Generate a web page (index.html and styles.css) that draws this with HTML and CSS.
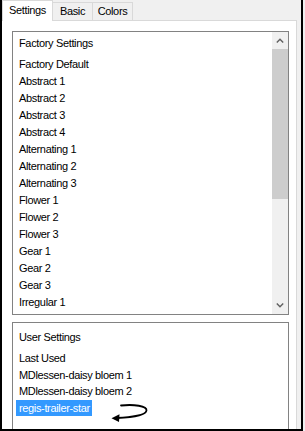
FILE: index.html
```html
<!DOCTYPE html>
<html lang="en">

<head>
    <meta charset="UTF-8">
    <meta name="viewport" content="width=device-width, initial-scale=1.0">
    <title>Settings</title>
    <link rel="stylesheet" href="styles.css">
</head>

<body>
    <div class="window">
        <div class="tabs">
            <div class="tab tab-active">Settings</div>
            <div class="tab">Basic</div>
            <div class="tab">Colors</div>
        </div>

        <div class="panel">
            <div class="listbox listbox-factory">
                <div class="list-body">
                    <div class="list-title">Factory Settings</div>
                    <ul class="list-items">
                        <li>Factory Default</li>
                        <li>Abstract 1</li>
                        <li>Abstract 2</li>
                        <li>Abstract 3</li>
                        <li>Abstract 4</li>
                        <li>Alternating 1</li>
                        <li>Alternating 2</li>
                        <li>Alternating 3</li>
                        <li>Flower 1</li>
                        <li>Flower 2</li>
                        <li>Flower 3</li>
                        <li>Gear 1</li>
                        <li>Gear 2</li>
                        <li>Gear 3</li>
                        <li>Irregular 1</li>
                    </ul>
                </div>
                <div class="scrollbar">
                    <div class="scroll-btn">
                        <svg width="8" height="5" viewBox="0 0 8 5">
                            <path d="M0.8 4.4 L4 1.2 L7.2 4.4" fill="none" stroke="#606060" stroke-width="1.4" />
                        </svg>
                    </div>
                    <div class="scroll-track">
                        <div class="scroll-thumb"></div>
                    </div>
                    <div class="scroll-btn">
                        <svg width="8" height="5" viewBox="0 0 8 5">
                            <path d="M0.8 0.6 L4 3.8 L7.2 0.6" fill="none" stroke="#606060" stroke-width="1.4" />
                        </svg>
                    </div>
                </div>
            </div>

            <div class="listbox listbox-user">
                <div class="list-body">
                    <div class="list-title">User Settings</div>
                    <ul class="list-items">
                        <li>Last Used</li>
                        <li>MDlessen-daisy bloem 1</li>
                        <li>MDlessen-daisy bloem 2</li>
                        <li><span class="selected">regis-trailer-star</span></li>
                    </ul>
                </div>
                <!-- hand drawn pointer next to the selected entry -->
                <svg class="pointer-arrow" width="46" height="24" viewBox="0 0 46 24">
                    <path d="M15 4.5 C28 3 41 5 40.5 9.5 C40 14 26 16.5 11 17" fill="none" stroke="#000"
                        stroke-width="1.8" stroke-linecap="round" />
                    <polygon points="5.5,17.2 13.5,13.2 13,21" fill="#000" />
                </svg>
            </div>
        </div>
    </div>
</body>

</html>
```

FILE: styles.css
```css
* {
    margin: 0;
    padding: 0;
    box-sizing: border-box;
}

body {
    font-family: 'Liberation Sans', Arial, sans-serif;
    font-size: 11px;
    letter-spacing: -0.35px;
    color: #000;
    background: #f0f0f0;
}

.window {
    width: 303px;
    height: 431px;
    border: 2px solid #000;
    border-top: none;
    background: #f0f0f0;
    display: flex;
    flex-direction: column;
}

/* tab strip */
.tabs {
    height: 20px;
    flex-shrink: 0;
    display: flex;
    align-items: flex-end;
    position: relative;
    z-index: 1;
}

.tab {
    width: 41px;
    height: 18px;
    margin-left: -1px;
    border: 1px solid #d9d9d9;
    border-bottom: none;
    background: #f0f0f0;
    text-align: center;
    line-height: 17px;
}

.tab-active {
    width: 51px;
    height: 21px;
    margin-left: 0;
    margin-bottom: -1px;
    background: #fff;
    line-height: 18px;
    position: relative;
    z-index: 1;
}

/* page body */
.panel {
    flex: 1;
    margin-right: 4px;
    background: #fff;
    border: 1px solid #d9d9d9;
    border-left: none;
    border-bottom: none;
    padding: 10px 7px 0 10px;
    overflow: hidden;
}

.listbox {
    display: flex;
    border: 1px solid #828282;
    background: #fff;
}

.listbox-factory {
    height: 284px;
}

.listbox-user {
    height: 200px;
    margin-top: 7px;
    position: relative;
}

.list-body {
    flex: 1;
    padding: 3px 0 0 6px;
    overflow: hidden;
}

.listbox-user .list-body {
    padding-top: 6px;
}

.list-title {
    line-height: 17px;
    margin-bottom: 4px;
}

.list-items {
    list-style: none;
}

.list-items li {
    line-height: 17px;
    white-space: nowrap;
}

.listbox-user .list-items li {
    line-height: 16.7px;
}

.selected {
    display: inline-block;
    margin-left: -3px;
    padding: 0 2px 0 3px;
    line-height: 16px;
    background: #3399ff;
    color: #fff;
}

/* scrollbar */
.scrollbar {
    width: 16px;
    display: flex;
    flex-direction: column;
    background: #f0f0f0;
}

.scroll-btn {
    height: 17px;
    display: flex;
    justify-content: center;
    align-items: center;
}

.scroll-track {
    flex: 1;
}

.scroll-thumb {
    height: 150px;
    background: #cdcdcd;
}

.pointer-arrow {
    position: absolute;
    left: 93px;
    top: 78px;
}
```
